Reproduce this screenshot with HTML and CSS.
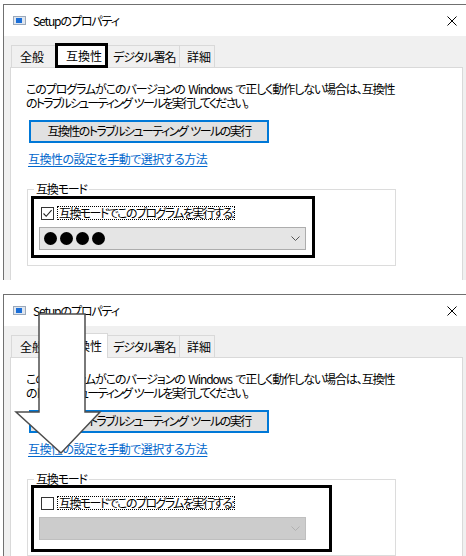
FILE: index.html
```html
<!DOCTYPE html>
<html lang="ja">
<head>
<meta charset="utf-8">
<title>Setupのプロパティ</title>
<link rel="stylesheet" href="styles.css">
</head>
<body>
  <section class="shot">
    <div class="win">
      <div class="titlebar">
        <svg class="appicon" width="13" height="9" viewBox="0 0 13 9"><rect x="0.5" y="0.5" width="12" height="8" fill="#dfe6ef" stroke="#9aa8ba"/><rect x="3" y="2" width="6" height="5" fill="#1a6ed8"/></svg>
        <span class="title">Setupのプロパティ</span>
        <svg class="close" width="10" height="10" viewBox="0 0 10 10"><path d="M0.5 0.5L9.5 9.5M9.5 0.5L0.5 9.5" stroke="#000" stroke-width="1"/></svg>
      </div>
      <div class="tabs">
        <div class="tab t-general">全般</div>
        <div class="tab sel hl">互換性</div>
        <div class="tab t-sig">デジタル署名</div>
        <div class="tab t-detail">詳細</div>
      </div>
      <div class="panel">
        <p class="desc"><span class="l1">このプログラムがこのバージョンの Windows で正しく動作しない場合は、互換性</span><span class="l2">のトラブルシューティング ツールを実行してください。</span></p>
        <div class="btn">互換性のトラブルシューティング ツールの実行</div>
        <a class="link">互換性の設定を手動で選択する方法</a>
        <fieldset class="group">
          <legend>互換モード</legend>
          <div class="row">
            <span class="cb"><svg width="11" height="11" viewBox="0 0 11 11"><path d="M1.5 5.5L4.2 8.3L9.6 2.2" fill="none" stroke="#222" stroke-width="1.1"/></svg></span>
            <span class="cblabel">互換モードでこのプログラムを実行する:</span>
          </div>
          <div class="combo">
            <span class="dots"><i></i><i></i><i></i><i></i></span>
            <svg class="chev" width="9" height="5" viewBox="0 0 9 5"><path d="M0.5 0.5L4.5 4.5L8.5 0.5" fill="none" stroke="#555" stroke-width="1"/></svg>
          </div>
        </fieldset>
      </div>
    </div>
    <div class="mark mark1"></div>
  </section>

  <section class="shot shot2">
    <div class="win">
      <div class="titlebar">
        <svg class="appicon" width="13" height="9" viewBox="0 0 13 9"><rect x="0.5" y="0.5" width="12" height="8" fill="#dfe6ef" stroke="#9aa8ba"/><rect x="3" y="2" width="6" height="5" fill="#1a6ed8"/></svg>
        <span class="title">Setupのプロパティ</span>
        <svg class="close" width="10" height="10" viewBox="0 0 10 10"><path d="M0.5 0.5L9.5 9.5M9.5 0.5L0.5 9.5" stroke="#000" stroke-width="1"/></svg>
      </div>
      <div class="tabs">
        <div class="tab t-general">全般</div>
        <div class="tab sel">互換性</div>
        <div class="tab t-sig">デジタル署名</div>
        <div class="tab t-detail">詳細</div>
      </div>
      <div class="panel">
        <p class="desc"><span class="l1">このプログラムがこのバージョンの Windows で正しく動作しない場合は、互換性</span><span class="l2">のトラブルシューティング ツールを実行してください。</span></p>
        <div class="btn">互換性のトラブルシューティング ツールの実行</div>
        <a class="link">互換性の設定を手動で選択する方法</a>
        <fieldset class="group">
          <legend>互換モード</legend>
          <div class="row">
            <span class="cb"></span>
            <span class="cblabel">互換モードでこのプログラムを実行する:</span>
          </div>
          <div class="combo disabled">
            <svg class="chev" width="9" height="5" viewBox="0 0 9 5"><path d="M0.5 0.5L4.5 4.5L8.5 0.5" fill="none" stroke="#b0b0b0" stroke-width="1"/></svg>
          </div>
        </fieldset>
      </div>
    </div>
    <div class="mark mark2"></div>
    <svg class="arrow" width="120" height="170" viewBox="0 0 120 170"><path d="M39 24H85V122H100L61 163L16 122H39Z" fill="#fff" stroke="#4d4d4d" stroke-width="1.5" stroke-linejoin="miter"/></svg>
  </section>
</body>
</html>
```

FILE: styles.css
```css
* { box-sizing: border-box; }
html, body { margin: 0; padding: 0; background: #fff; }
body {
  width: 466px;
  height: 556px;
  overflow: hidden;
  font-family: "Noto Sans CJK JP", sans-serif;
  font-size: 12px;
  color: #000;
  font-feature-settings: "palt";
}

.shot {
  position: relative;
  height: 290px;
  padding: 4px 0 0 3px;
  overflow: hidden;
}

.win {
  height: 276px;
  border-left: 1px solid #707070;
  border-top: 1px solid #707070;
  background: #f0f0f0;
  overflow: hidden;
}
.shot2 .win { height: 300px; }

.titlebar {
  height: 31px;
  background: #fff;
  display: flex;
  align-items: center;
  padding-left: 9px;
}
.appicon { flex: none; }
.title { margin-left: 7px; line-height: 14px; letter-spacing: -1.1px; }
.close { margin-left: auto; margin-right: 9px; }

.tabs {
  height: 31px;
  display: flex;
  align-items: flex-end;
  padding-left: 8px;
  position: relative;
  z-index: 2;
}
.tab {
  height: 22px;
  line-height: 20px;
  padding: 1px 6px 0;
  border: 1px solid #d9d9d9;
  border-bottom: none;
  margin-left: -1px;
  background: #f0f0f0;
  white-space: nowrap;
}
.t-general { width: 47px; padding-left: 8px; }
.t-sig { width: 75px; padding-left: 7px; letter-spacing: -1px; }
.t-detail { width: 36px; padding-left: 7px; }
.tab.sel {
  position: relative;
  width: 53px;
  height: 25px;
  margin: 0 -2px -1px -3px;
  padding: 2px 0 0 10px;
  background: #fff;
  z-index: 3;
}
.tab.hl::after {
  content: "";
  position: absolute;
  left: -1px;
  top: -1px;
  right: -1px;
  bottom: 0;
  border: 3px solid #000;
}

.panel {
  position: relative;
  z-index: 1;
  margin-left: 6px;
  width: 453px;
  height: 260px;
  background: #fff;
  border: 1px solid #d9d9d9;
  padding: 14px 0 0 15px;
}

.desc {
  margin: 0;
  line-height: 14px;
  white-space: nowrap;
  word-spacing: 2px;
}
.desc span { display: block; }
.desc .l1 { letter-spacing: -1.1px; }
.desc .l2 { letter-spacing: -1.83px; }

.btn {
  margin: 10px 0 0 3px;
  width: 240px;
  height: 23px;
  border: 2px solid #0078d7;
  background: #e1e1e1;
  text-align: center;
  line-height: 18px;
  letter-spacing: -1.55px;
  word-spacing: 2px;
}

.link {
  display: block;
  width: fit-content;
  margin: 9px 0 0 2px;
  line-height: 14px;
  color: #0066cc;
  text-decoration: underline;
  text-underline-offset: 2px;
  letter-spacing: -0.5px;
}

.group {
  margin: 16px 0 0 1px;
  width: 369px;
  border: 1px solid #dcdcdc;
  padding: 10px 12px 15px 13px;
  min-inline-size: 0;
}
.group legend {
  padding: 0 2px;
  margin-left: -7px;
  line-height: 14px;
  letter-spacing: -1.2px;
}

.row {
  display: flex;
  align-items: center;
  height: 14px;
}
.cb {
  width: 13px;
  height: 13px;
  border: 1px solid #333;
  background: #fff;
  display: flex;
  align-items: center;
  justify-content: center;
  flex: none;
}
.cblabel {
  margin-left: 3px;
  border: 1px dotted #000;
  line-height: 12px;
  padding: 0 1px;
  white-space: nowrap;
  letter-spacing: -1.6px;
}

.combo {
  margin: 7px 0 0 -2px;
  width: 267px;
  height: 23px;
  border: 1px solid #adadad;
  background: #e5e5e5;
  display: flex;
  align-items: center;
  padding-left: 4px;
}
.combo.disabled {
  background: #cccccc;
  border-color: #bfbfbf;
}
.dots { display: flex; gap: 3px; }
.dots i {
  display: block;
  width: 13px;
  height: 13px;
  border-radius: 50%;
  background: #000;
}
.chev { margin-left: auto; margin-right: 5px; }

.mark {
  position: absolute;
  z-index: 10;
  border: 3px solid #000;
}
.mark1 { left: 31px; top: 196px; width: 284px; height: 62px; }
.mark2 { left: 31px; top: 195px; width: 301px; height: 67px; }

.arrow {
  position: absolute;
  z-index: 11;
  left: 0;
  top: 0;
  pointer-events: none;
}
```
